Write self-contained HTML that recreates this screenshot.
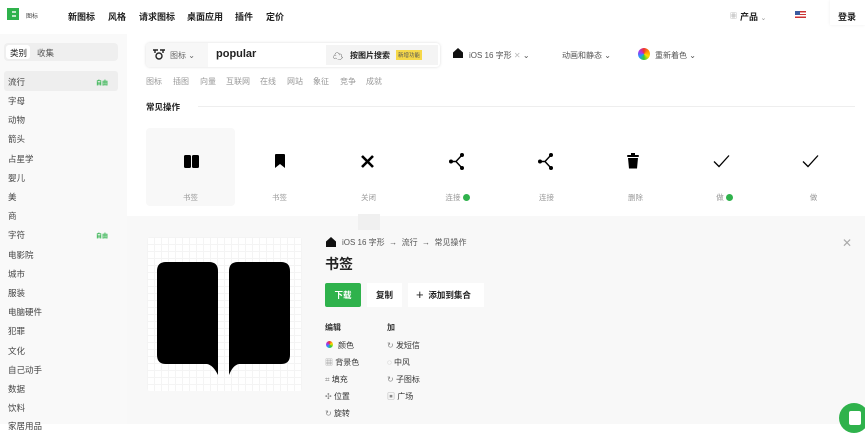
<!DOCTYPE html>
<html><head><meta charset="utf-8"><style>
*{margin:0;padding:0;box-sizing:border-box}
body{width:865px;height:424px;overflow:hidden;background:#fff;font-family:"Liberation Sans","Noto Sans CJK SC",sans-serif;color:#222;position:relative}
.a{position:absolute;white-space:nowrap}
.nav{font-size:9px;font-weight:bold;top:10px}
.side{position:absolute;left:0;top:34px;width:127px;height:390px;background:#f9f9f9}
.si{position:absolute;left:8px;font-size:8.5px;color:#444}
.free{position:absolute;left:96px;font-size:6px;color:#2fb24c;font-weight:bold}
.lab{font-size:7.5px;color:#999;position:absolute;width:89px;text-align:center;top:192px}
.tag{font-size:8px;color:#999;top:76px}
.dot{display:inline-block;width:7px;height:7px;border-radius:50%;background:#2fb24c;vertical-align:-1px;margin-left:2px}
.ed{font-size:8px;color:#333}
</style></head><body>
<!-- header -->
<svg class="a" style="left:7px;top:8px" width="12" height="12"><path d="M0 0H12V12H0Z" fill="#2fb24c"/><path d="M5 3H9V5H5ZM5 7H9V9H5Z" fill="#fff" opacity=".7"/></svg>
<div class="a" style="left:26px;top:11px;font-size:6px;color:#444">图标</div>
<div class="a nav" style="left:68px">新图标</div>
<div class="a nav" style="left:108px">风格</div>
<div class="a nav" style="left:139px">请求图标</div>
<div class="a nav" style="left:187px">桌面应用</div>
<div class="a nav" style="left:235px">插件</div>
<div class="a nav" style="left:266px">定价</div>
<div class="a" style="left:730px;top:11px;font-size:7px;color:#999">▦</div>
<div class="a nav" style="left:740px">产品 <span style="font-weight:normal;color:#999;font-size:7px">⌄</span></div>
<div class="a" style="left:795px;top:11px;width:11px;height:7px;background:linear-gradient(#c33 0 20%,#fff 20% 40%,#c33 40% 60%,#fff 60% 80%,#c33 80%)"><div style="width:5px;height:4px;background:#3a5ba0"></div></div>
<div class="a" style="left:830px;top:0;width:35px;height:25px;background:#fff;box-shadow:0 0 3px #eee"></div>
<div class="a nav" style="left:838px">登录</div>
<!-- sidebar -->
<div class="side"></div>
<div class="a" style="left:4px;top:43px;width:114px;height:18px;background:#efefef;border-radius:4px"></div>
<div class="a" style="left:6px;top:45px;width:24px;height:14px;background:#fff;border-radius:3px"></div>
<div class="a" style="left:10px;top:47px;font-size:8.5px">类别</div>
<div class="a" style="left:37px;top:47px;font-size:8.5px;color:#555">收集</div>
<div class="a" style="left:4px;top:71px;width:114px;height:20px;background:#eee;border-radius:3px"></div>
<div class="si" style="top:76px">流行</div><div class="free" style="top:78px">自由</div>
<div class="si" style="top:95px">字母</div>
<div class="si" style="top:114px">动物</div>
<div class="si" style="top:133px">箭头</div>
<div class="si" style="top:153px">占星学</div>
<div class="si" style="top:172px">婴儿</div>
<div class="si" style="top:191px">美</div>
<div class="si" style="top:210px">商</div>
<div class="si" style="top:229px">字符</div><div class="free" style="top:231px">自由</div>
<div class="si" style="top:249px">电影院</div>
<div class="si" style="top:268px">城市</div>
<div class="si" style="top:287px">服装</div>
<div class="si" style="top:306px">电脑硬件</div>
<div class="si" style="top:325px">犯罪</div>
<div class="si" style="top:345px">文化</div>
<div class="si" style="top:364px">自己动手</div>
<div class="si" style="top:383px">数据</div>
<div class="si" style="top:402px">饮料</div>
<div class="si" style="top:420px">家居用品</div>
<!-- search -->
<div class="a" style="left:146px;top:43px;width:294px;height:24px;border-radius:4px;background:#fff;box-shadow:0 0 3px #ddd"></div>
<div class="a" style="left:146px;top:43px;width:62px;height:24px;background:#f7f7f7;border-radius:4px 0 0 4px"></div>
<svg class="a" style="left:152px;top:48px" width="14" height="12"><path d="M1 2H6M8 2H13M3 2V5M11 2V5" stroke="#222" stroke-width="1.4" fill="none"/><circle cx="7" cy="8" r="3" stroke="#222" stroke-width="1.4" fill="none"/></svg>
<div class="a" style="left:170px;top:50px;font-size:8px;color:#666">图标 ⌄</div>
<div class="a" style="left:216px;top:48px;font-size:11px;font-weight:bold">popular</div>
<div class="a" style="left:326px;top:45px;width:112px;height:20px;background:#f4f4f4"></div>
<div class="a" style="left:333px;top:48px;font-size:10px">☁</div>
<div class="a" style="left:350px;top:50px;font-size:8px;font-weight:bold">按图片搜索</div>
<div class="a" style="left:396px;top:50px;font-size:5.5px;background:#f6d84a;padding:1px 2px;color:#555">新增功能</div>
<div class="a" style="left:453px;top:48px;width:10px;height:10px;background:#111;clip-path:polygon(50% 0,100% 45%,100% 100%,0 100%,0 45%)"></div>
<div class="a" style="left:469px;top:50px;font-size:8px;color:#555">iOS 16 字形 <span style="color:#bbb">✕</span> ⌄</div>
<div class="a" style="left:562px;top:50px;font-size:8px;color:#555">动画和静态 ⌄</div>
<div class="a" style="left:638px;top:48px;width:12px;height:12px;border-radius:50%;background:conic-gradient(#e33,#f90,#fd0,#3c3,#29f,#a3e,#e33)"></div>
<div class="a" style="left:655px;top:50px;font-size:8px;color:#555">重新着色 ⌄</div>
<div class="a tag" style="left:146px">图标</div>
<div class="a tag" style="left:173px">插图</div>
<div class="a tag" style="left:200px">向量</div>
<div class="a tag" style="left:226px">互联网</div>
<div class="a tag" style="left:260px">在线</div>
<div class="a tag" style="left:287px">网站</div>
<div class="a tag" style="left:313px">象征</div>
<div class="a tag" style="left:340px">竞争</div>
<div class="a tag" style="left:366px">成就</div>
<div class="a" style="left:146px;top:101px;font-size:8.5px;font-weight:bold">常见操作</div>
<div class="a" style="left:198px;top:106px;width:657px;height:1px;background:#eee"></div>
<!-- icon row -->
<div class="a" style="left:146px;top:128px;width:89px;height:78px;background:#f8f8f8;border-radius:4px"></div>
<svg class="a" style="left:184px;top:155px" width="15" height="13"><rect x="0" y="0" width="7" height="13" rx="1.5"/><rect x="8" y="0" width="7" height="13" rx="1.5"/></svg>
<svg class="a" style="left:275px;top:154px" width="10" height="14"><path d="M0 1Q0 0 1 0H9Q10 0 10 1V14L5 10L0 14Z"/></svg>
<svg class="a" style="left:361px;top:155px" width="13" height="13"><path d="M1 1L12 12M12 1L1 12" stroke="#000" stroke-width="2.6"/></svg>
<svg class="a" style="left:449px;top:153px" width="16" height="17"><path d="M2 8.5H7L13 2M7 8.5L13 15" stroke="#000" stroke-width="1.4" fill="none"/><circle cx="2" cy="8.5" r="2"/><circle cx="13" cy="2" r="2"/><circle cx="13" cy="15" r="2"/></svg>
<svg class="a" style="left:538px;top:153px" width="16" height="17"><path d="M2 8.5H7L13 2M7 8.5L13 15" stroke="#000" stroke-width="1.4" fill="none"/><circle cx="2" cy="8.5" r="2"/><circle cx="13" cy="2" r="2"/><circle cx="13" cy="15" r="2"/></svg>
<svg class="a" style="left:627px;top:153px" width="12" height="16"><rect x="0" y="2" width="12" height="2" rx="1"/><rect x="4" y="0" width="4" height="3"/><path d="M1 5H11L10 15.5H2Z"/></svg>
<svg class="a" style="left:713px;top:154px" width="17" height="14"><path d="M1 7.5L6 12.5L16 1.5" stroke="#000" stroke-width="1.3" fill="none"/></svg>
<svg class="a" style="left:802px;top:154px" width="17" height="14"><path d="M1 7.5L6 12.5L16 1.5" stroke="#000" stroke-width="1.3" fill="none"/></svg>
<div class="lab" style="left:146px">书签</div>
<div class="lab" style="left:235px">书签</div>
<div class="lab" style="left:324px">关闭</div>
<div class="lab" style="left:413px">连接<span class="dot"></span></div>
<div class="lab" style="left:502px">连接</div>
<div class="lab" style="left:591px">删除</div>
<div class="lab" style="left:680px">做<span class="dot"></span></div>
<div class="lab" style="left:769px">做</div>
<!-- detail panel -->
<div class="a" style="left:127px;top:216px;width:738px;height:208px;background:#f8f8f8"></div>
<div class="a" style="left:358px;top:214px;width:22px;height:16px;background:#f0f0f0"></div>
<div class="a" style="left:147px;top:237px;width:155px;height:154px;background:#fff;background-image:linear-gradient(#f4f4f4 1px,transparent 1px),linear-gradient(90deg,#f4f4f4 1px,transparent 1px);background-size:7px 7px;border-radius:3px"></div>
<svg class="a" style="left:157px;top:262px" width="134" height="113"><path d="M9 0H52Q61 0 61 9V102Q61 108 61 113Q56 103 50 102H9Q0 102 0 93V9Q0 0 9 0Z"/><path d="M81 0H124Q133 0 133 9V93Q133 102 124 102H82Q76 103 72 113Q72 108 72 102V9Q72 0 81 0Z"/></svg>
<div class="a" style="left:326px;top:237px;width:10px;height:10px;background:#111;clip-path:polygon(50% 0,100% 45%,100% 100%,0 100%,0 45%)"></div>
<div class="a" style="left:342px;top:237px;font-size:8px;color:#555">iOS 16 字形 &nbsp;→ &nbsp;流行 &nbsp;→ &nbsp;常见操作</div>
<div class="a" style="left:325px;top:254px;font-size:14px;font-weight:bold">书签</div>
<div class="a" style="left:325px;top:283px;width:36px;height:24px;background:#2fb24c;border-radius:2px;color:#fff;font-size:8.5px;font-weight:bold;text-align:center;line-height:24px">下载</div>
<div class="a" style="left:367px;top:283px;width:35px;height:24px;background:#fff;font-size:8.5px;font-weight:bold;text-align:center;line-height:24px">复制</div>
<div class="a" style="left:408px;top:283px;width:76px;height:24px;background:#fff;font-size:8.5px;font-weight:bold;line-height:24px;padding-left:8px"><span style="font-size:13px;font-weight:normal;vertical-align:-1px">+</span>&nbsp; 添加到集合</div>
<div class="a ed" style="left:325px;top:322px;font-weight:bold">编辑</div>
<div class="a ed" style="left:387px;top:322px;font-weight:bold">加</div>
<div class="a" style="left:326px;top:341px;width:7px;height:7px;border-radius:50%;background:conic-gradient(#e33,#fd0,#3c3,#29f,#a3e,#e33)"></div>
<div class="a ed" style="left:338px;top:340px">颜色</div>
<div class="a ed" style="left:325px;top:357px;color:#888">▦ <span style="color:#333">背景色</span></div>
<div class="a ed" style="left:325px;top:374px;color:#888">⌗ <span style="color:#333">填充</span></div>
<div class="a ed" style="left:325px;top:391px;color:#888">✣ <span style="color:#333">位置</span></div>
<div class="a ed" style="left:325px;top:408px;color:#888">↻ <span style="color:#333">旋转</span></div>
<div class="a ed" style="left:387px;top:340px;color:#888">↻ <span style="color:#333">发短信</span></div>
<div class="a ed" style="left:387px;top:357px;color:#888">◌ <span style="color:#333">中风</span></div>
<div class="a ed" style="left:387px;top:374px;color:#888">↻ <span style="color:#333">子图标</span></div>
<div class="a ed" style="left:387px;top:391px;color:#888">▣ <span style="color:#333">广场</span></div>
<div class="a" style="left:842px;top:236px;font-size:12px;color:#aaa">✕</div>
<div class="a" style="left:839px;top:403px;width:30px;height:30px;border-radius:50%;background:#2fb24c"></div>
<div class="a" style="left:849px;top:411px;width:12px;height:14px;background:#fff;border-radius:2px"></div>
</body></html>
